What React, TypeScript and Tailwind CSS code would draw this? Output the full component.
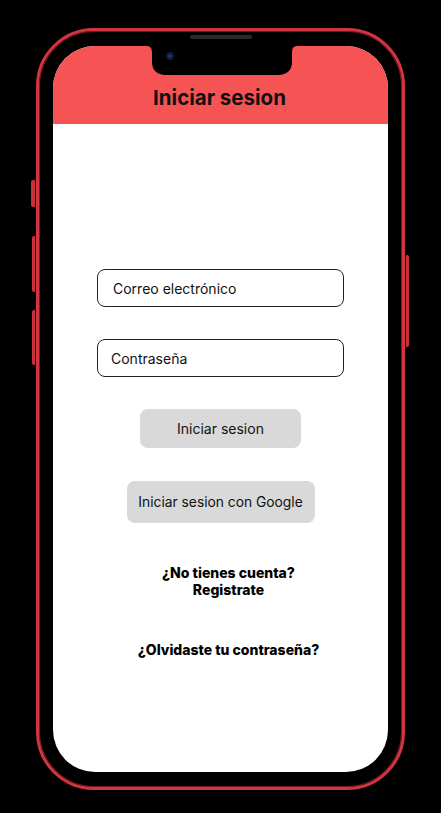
export default function App() {
  return (
    <div className="h-[813px] w-[441px] bg-black pl-[36px] pt-[28px] font-['Inter',sans-serif]">
      <div className="relative h-[762px] w-[369px] rounded-[58px] border-[3px] border-[#d2353f] bg-black px-[14px] py-[15px] shadow-[inset_0_0_0_1px_#7a1a20]">
        {/* side buttons */}
        <div className="absolute left-[-8px] top-[149px] h-[27px] w-[4px] rounded-l-[2px] bg-[#c9303a]" />
        <div className="absolute left-[-7px] top-[205px] h-[56px] w-[3px] rounded-l-[2px] bg-[#c9303a]" />
        <div className="absolute left-[-7px] top-[279px] h-[55px] w-[3px] rounded-l-[2px] bg-[#c9303a]" />
        <div className="absolute right-[-7px] top-[224px] h-[92px] w-[3px] rounded-r-[2px] bg-[#c9303a]" />
        {/* speaker */}
        <div className="absolute left-[151px] top-[4px] h-[4px] w-[62px] rounded-full bg-[#2a2a2a]" />

        <div className="relative flex h-full w-full flex-col overflow-hidden rounded-[42px] bg-white">
          <div className="h-[78px] bg-[#f55354] pt-[40px] pr-[2px] text-center text-[20.5px] font-bold leading-6 text-[#111]">
            Iniciar sesion
          </div>
          {/* notch */}
          <svg className="absolute left-[93px] top-0" width="152" height="30" viewBox="0 0 152 30">
            <path d="M0 0 H152 C147 0 146 2 146 8 V16 C146 24 141 29 132 29 H20 C11 29 6 24 6 16 V8 C6 2 5 0 0 0 Z" fill="#000" />
            <circle cx="24" cy="10" r="4" fill="#101a3a" />
            <circle cx="24" cy="10" r="1.6" fill="#2c3f7a" />
          </svg>

          <div className="flex flex-col px-[44px] pt-[145px]">
            <div className="flex h-[38px] items-center rounded-[8px] border border-[#222] pl-[15px] text-[14px] text-[#111]">
              Correo electrónico
            </div>
            <div className="mt-[32px] flex h-[38px] items-center rounded-[8px] border border-[#222] pl-[13px] text-[14px] text-[#111]">
              Contraseña
            </div>
            <div className="mt-[32px] flex justify-center">
              <div className="flex h-[39px] w-[161px] items-center justify-center rounded-[8px] bg-[#d9d9d9] text-[14px] text-[#111]">
                Iniciar sesion
              </div>
            </div>
            <div className="mt-[33px] flex justify-center">
              <div className="flex h-[42px] w-[188px] items-center justify-center rounded-[8px] bg-[#d9d9d9] text-[13.8px] text-[#111]">
                Iniciar sesion con Google
              </div>
            </div>
            <div className="mt-[41px] pl-[16px] text-center text-[14px] font-extrabold leading-[17px] text-black">
              ¿No tienes cuenta?
              <br />
              Registrate
            </div>
            <div className="mt-[43px] pl-[16px] text-center text-[14px] font-extrabold leading-[17px] text-black">
              ¿Olvidaste tu contraseña?
            </div>
          </div>
        </div>
      </div>
    </div>
  )
}
